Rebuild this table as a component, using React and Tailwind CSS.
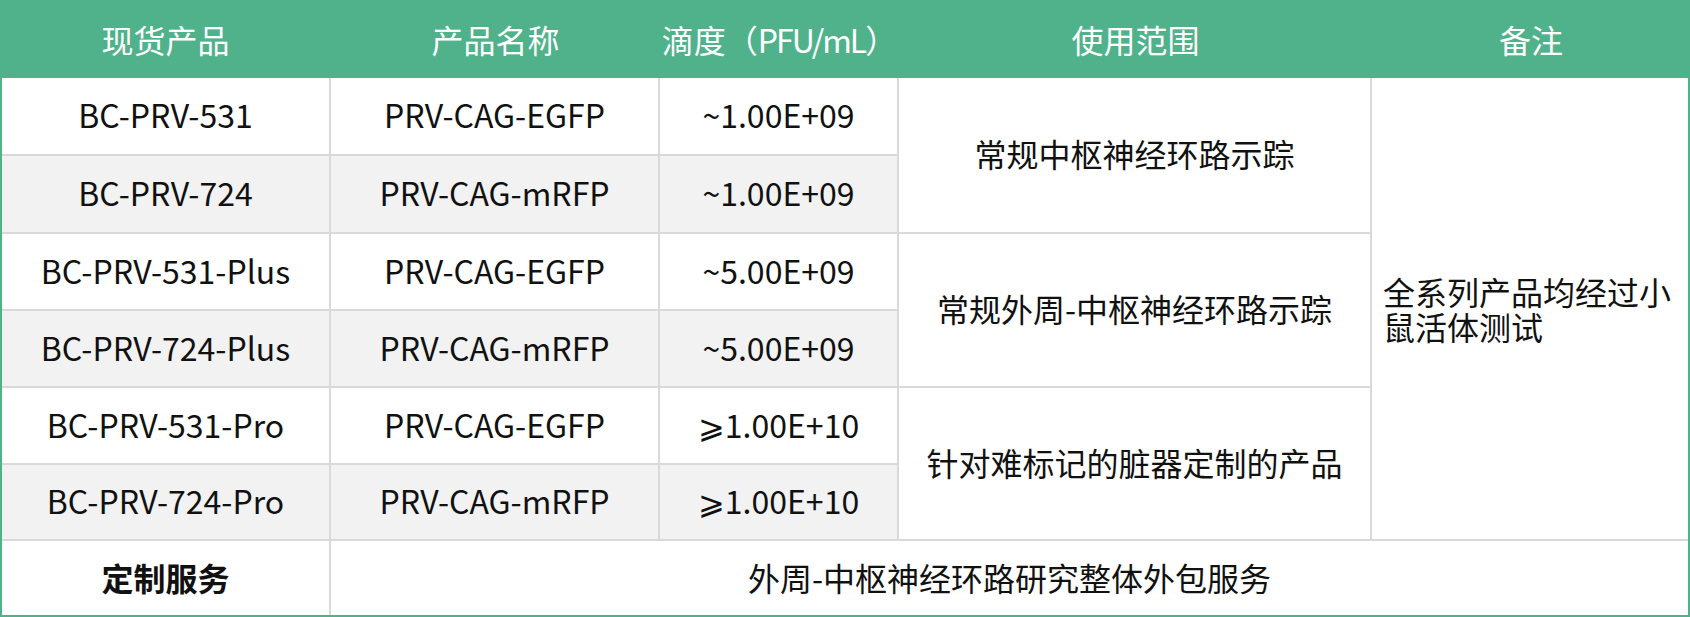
import React from "react";

const rows = [
  ["BC-PRV-531", "PRV-CAG-EGFP", "~1.00E+09"],
  ["BC-PRV-724", "PRV-CAG-mRFP", "~1.00E+09"],
  ["BC-PRV-531-Plus", "PRV-CAG-EGFP", "~5.00E+09"],
  ["BC-PRV-724-Plus", "PRV-CAG-mRFP", "~5.00E+09"],
  ["BC-PRV-531-Pro", "PRV-CAG-EGFP", "⩾1.00E+10"],
  ["BC-PRV-724-Pro", "PRV-CAG-mRFP", "⩾1.00E+10"],
];

const rowStart = ["row-start-1", "row-start-2", "row-start-3", "row-start-4", "row-start-5", "row-start-6"];
const colStart = ["col-start-1", "col-start-2", "col-start-3"];

export default function App() {
  return (
    <div
      className="w-[1690px] h-[617px] bg-white text-[32px] text-[#111]"
      style={{ fontFamily: '"Noto Sans CJK SC", "Noto Sans", sans-serif' }}
    >
      <div className="grid grid-cols-[331px_329px_239px_473px_318px] h-[78px] bg-[#50b28b] text-white">
        <div className="flex items-center justify-center">现货产品</div>
        <div className="flex items-center justify-center">产品名称</div>
        <div className="flex items-center justify-center whitespace-nowrap">
          滴度（<span className="tracking-[-2px]">PFU/mL</span>）
        </div>
        <div className="flex items-center justify-center">使用范围</div>
        <div className="flex items-center justify-center">备注</div>
      </div>
      <div className="grid grid-cols-[327px_327px_237px_471px_316px] grid-rows-[76px_76px_75px_75px_75px_74px_74px] gap-[2px] bg-[#d9d9d9] border-x-2 border-b-2 border-[#50b28b] h-[539px]">
        {rows.map((r, i) =>
          r.map((c, j) => (
            <div
              key={i + "-" + j}
              className={
                "flex items-center justify-center pb-[4px] " +
                rowStart[i] +
                " " +
                colStart[j] +
                " " +
                (i % 2 === 1 ? "bg-[#f2f2f2]" : "bg-white")
              }
            >
              {c}
            </div>
          ))
        )}
        <div className="col-start-4 row-start-1 row-span-2 bg-white flex items-center justify-center pb-[4px]">
          常规中枢神经环路示踪
        </div>
        <div className="col-start-4 row-start-3 row-span-2 bg-white flex items-center justify-center pb-[4px]">
          常规外周-中枢神经环路示踪
        </div>
        <div className="col-start-4 row-start-5 row-span-2 bg-white flex items-center justify-center pb-[4px]">
          针对难标记的脏器定制的产品
        </div>
        <div className="col-start-5 row-start-1 row-span-6 bg-white flex items-center px-[11px] leading-[35px]">
          全系列产品均经过小鼠活体测试
        </div>
        <div className="col-start-1 row-start-7 bg-white flex items-center justify-center font-bold pb-[2px]">
          定制服务
        </div>
        <div className="col-start-2 col-span-4 row-start-7 bg-white flex items-center justify-center pb-[2px]">
          外周-中枢神经环路研究整体外包服务
        </div>
      </div>
    </div>
  );
}
